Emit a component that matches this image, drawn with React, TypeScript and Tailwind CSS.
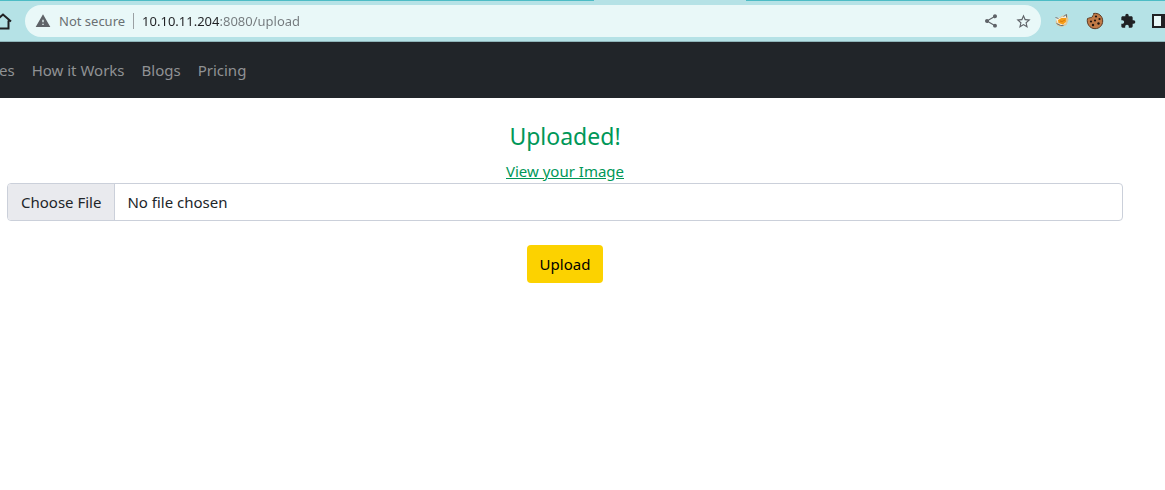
import { MdExtension, MdShare, MdStarBorder, MdWarning } from "react-icons/md";

function HomeIcon() {
  return (
    <svg width="20" height="20" viewBox="0 0 20 20" aria-hidden="true">
      <path
        d="M2 10.500 10 3.500l8 7M4.500 9.500v8h11v-8"
        fill="none"
        stroke="currentColor"
        strokeWidth="2"
      />
    </svg>
  );
}

function FoxIcon() {
  return (
    <svg width="16" height="16" viewBox="0 0 16 16" aria-hidden="true">
      <path d="M3 6 8 3l5-2 1.500 6-2 5-5 2-4-1.500L1.500 9z" fill="#e0c596" />
      <path d="M1.500 4.500 6 5l6-3 .5 4-1 4.500-4 1.500-4-2z" fill="#f4ecdc" />
      <path d="M4 7 7.500 5 12.500 5l-.5 4-3 2.500L4.500 10z" fill="#f79d16" />
      <path d="M1.500 4.500 4.500 5.500M9.500 3.500l3-2v3M2.500 10.500l4 2h3" fill="none" stroke="#6a7378" />
      <path d="m6 8 2 .5 3-1.500" stroke="#d87908" fill="none" />
    </svg>
  );
}

function CookieIcon() {
  return (
    <svg width="18" height="18" viewBox="0 0 18 18" aria-hidden="true">
      <path
        d="M7.500 1.500C8 3 7 3.500 6.500 4 6.500 5.500 5 6 4 5.500 3 6.500 2 6 1.500 6.500.3 11.500 3.500 16.500 9 16.700c4.500 0 7.700-3.500 7.700-7.700C16.700 4 12.500.5 7.500 1.500z"
        fill="#c07a47"
        stroke="#5b3a25"
      />
      <g fill="#1f1410">
        <circle cx="10" cy="4.500" r="1.100" />
        <circle cx="13.500" cy="7" r="1.100" />
        <circle cx="9" cy="8.500" r="1.100" />
        <circle cx="5" cy="9.500" r="1.100" />
        <circle cx="12.500" cy="11.500" r="1.200" />
        <circle cx="7" cy="13" r="1.200" />
      </g>
    </svg>
  );
}

function PanelIcon() {
  return (
    <svg width="18" height="14" viewBox="0 0 18 14" aria-hidden="true">
      <path d="M0 0h18v14H0z" fill="currentColor" />
      <path d="M2 2h7v10H2z" fill="#e9f8f8" />
    </svg>
  );
}

function BrowserBar() {
  return (
    <header className="flex h-[42px] flex-col overflow-hidden border-b border-b-[#8fb5b9] bg-[#b5e2e6] text-[#202124]">
      <div className="flex h-px shrink-0 justify-between">
        <span className="w-[51%] bg-[#4dbcc5]" />
        <span className="w-[36%] bg-[#4dbcc5]" />
      </div>
      <div className="flex flex-1 items-center">
        <button type="button" aria-label="Home" className="-ml-[7px] shrink-0">
          <HomeIcon />
        </button>
        <div className="ml-3 flex h-8 flex-1 items-center rounded-full bg-[#e9f8f8] pr-[9px] pl-2.5 text-[13px] text-[#6a7073]">
          <button type="button" className="flex shrink-0 items-center gap-2">
            <MdWarning size={16} color="#5f6368" />
            Not secure
          </button>
          <span className="mx-2 h-4 w-px bg-[#9aa0a3]" />
          <input
            type="text"
            aria-label="Address"
            defaultValue="10.10.11.204:8080/upload"
            className="min-w-0 flex-1 bg-linear-to-r from-[#202124] from-[77px] to-[#73797c] to-[77px] bg-clip-text text-transparent outline-none"
          />
          <div className="flex gap-4 text-[#5f6368]">
            <button type="button" aria-label="Share">
              <MdShare size={16} />
            </button>
            <button type="button" aria-label="Bookmark">
              <MdStarBorder size={17} />
            </button>
          </div>
        </div>
        <div className="-mr-[5px] ml-[13px] flex shrink-0 items-center gap-4">
          <button type="button" aria-label="Proxy">
            <FoxIcon />
          </button>
          <button type="button" aria-label="Cookies">
            <CookieIcon />
          </button>
          <button type="button" aria-label="Extensions">
            <MdExtension size={16} />
          </button>
          <button type="button" aria-label="Side panel">
            <PanelIcon />
          </button>
        </div>
      </div>
    </header>
  );
}

export default function App() {
  return (
    <div className="min-h-screen overflow-x-hidden bg-white font-['Noto_Sans',sans-serif] text-[15px] leading-6 text-[#212529]">
      <BrowserBar />
      <nav className="flex h-14 items-center gap-[17px] bg-[#212529] text-[#909294]">
        <a href="#features" className="-ml-px">es</a>
        <a href="#how">How it Works</a>
        <a href="#blogs">Blogs</a>
        <a href="#pricing">Pricing</a>
      </nav>
      <main className="mr-[42px] ml-[7px] flex flex-col items-center pt-6 text-[#009758]">
        <h1 className="mb-2 text-[23px] leading-[29px]">Uploaded!</h1>
        <a href="#image" className="underline">
          View your Image
        </a>
        <form className="flex w-full flex-col items-center gap-6" onSubmit={(e) => e.preventDefault()}>
          <input
            type="file"
            aria-label="Image file"
            className="h-[38px] w-full rounded border border-[#cbd0da] bg-white text-[#212529] file:mr-3 file:h-9 file:border-r file:border-[#cbd0da] file:bg-[#e9eaee] file:px-[13px] file:text-[#212529]"
          />
          <button type="submit" className="rounded bg-[#fcd200] px-[13px] py-[7px] text-black">
            Upload
          </button>
        </form>
      </main>
    </div>
  );
}
